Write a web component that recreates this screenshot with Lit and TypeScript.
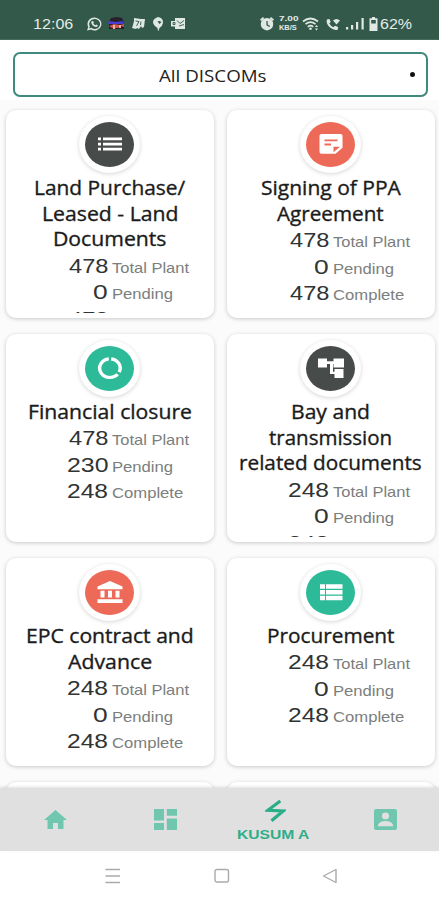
import { LitElement, html, css, svg } from "lit";
import { customElement, property } from "lit/decorators.js";

/** One line of text, stretched horizontally to a given width. */
@customElement("fit-text")
class FitText extends LitElement {
  @property() text = "";
  @property({ type: Number }) width = 0;

  static styles = css`
    :host { display: block; flex: none; }
    .box { display: block; }
    .line { display: inline-block; white-space: pre; transform-origin: 0 50%; }
  `;

  updated() {
    const box = this.renderRoot.querySelector(".box") as HTMLElement;
    const line = this.renderRoot.querySelector(".line") as HTMLElement;
    box.style.width = `${this.width}px`;
    line.style.transform = `scaleX(${this.width / line.offsetWidth})`;
  }

  render() {
    return html`<span class="box"><span class="line">${this.text}</span></span>`;
  }
}

type Line = [text: string, width: number];

interface Task {
  icon: string;
  tone: "dark" | "coral" | "green";
  title: Line[];
  stats: string[];
}

const NUMBER_WIDTH: Record<string, number> = { "478": 39, "230": 41, "248": 40.5, "0": 14.5 };
const STAT_LABELS: Line[] = [["Total Plant", 77], ["Pending", 61], ["Complete", 71]];

const TASKS: Task[] = [
  { icon: "list", tone: "dark", title: [["Land Purchase/", 151], ["Leased - Land", 136], ["Documents", 113]], stats: ["478", "0", "478"] },
  { icon: "note", tone: "coral", title: [["Signing of PPA", 140], ["Agreement", 107]], stats: ["478", "0", "478"] },
  { icon: "ring", tone: "green", title: [["Financial closure", 164]], stats: ["478", "230", "248"] },
  { icon: "tree", tone: "dark", title: [["Bay and", 79], ["transmission", 123], ["related documents", 183]], stats: ["248", "0", "248"] },
  { icon: "bank", tone: "coral", title: [["EPC contract and", 168], ["Advance", 84]], stats: ["248", "0", "248"] },
  { icon: "rows", tone: "green", title: [["Procurement", 128]], stats: ["248", "0", "248"] },
];

const GLYPHS: Record<string, unknown> = {
  list: svg`<path d="M0 5h3v3H0zM5 5h19v3H5zM0 10.500h3v3H0zM5 10.500h19v3H5zM0 16h3v3H0zM5 16h19v3H5z"/>`,
  note: svg`<path fill-rule="evenodd" d="M2.500 1h19Q23.500 1 23.500 3v13l-7 6.500h-14Q.5 22.500.5 20.500V3Q.5 1 2.500 1zM5.500 7v2h13V7zM5.500 11.500v2h6.500v-2zM14.500 15v6l6.500-6z"/>`,
  ring: svg`<g fill="none" stroke="#fff" stroke-width="3.400"><path d="M13.200 2A10.200 10.200 0 0 1 21.200 16.500"/><path d="M19.600 18.800A10.200 10.200 0 1 1 10.800 2"/></g>`,
  tree: svg`<path d="M-1 1.500h9v3h6.500v-3h10.500v10H14.500V7.500H14v8.500h1.500V13h9v10h-9v-4.500H11v-11H8V11.500h-9z"/>`,
  bank: svg`<path d="M12 0 24.500 6v3H-.5V6zM2.500 10.500h4v7.500h-4zM10 10.500h4v7.500h-4zM17.500 10.500h4v7.500h-4zM-.5 20h25v4H-.5z"/>`,
  rows: svg`<path d="M1 3.500h5v5H1zM7 3.500h16.500v5H7zM1 9.700h5v5H1zM7 9.700h16.500v5H7zM1 16h5v5H1zM7 16h16.500v5H7z"/>`,
};

@customElement("task-card")
class TaskCard extends LitElement {
  @property({ attribute: false }) task?: Task;

  static styles = css`
    :host {
      display: block; box-sizing: border-box; height: 207.5px; padding-bottom: 4.5px;
      background: #fff; border-radius: 10px;
      box-shadow: 0 1px 4px rgba(0, 0, 0, 0.2);
    }
    .content { height: 203px; overflow: hidden; }
    .badge {
      display: flex; align-items: center; justify-content: center;
      box-sizing: border-box; width: 61px; height: 57px; margin: 5.5px auto 2.4px;
      border-radius: 50%; background: #fff; box-shadow: 0 1px 4px rgba(0, 0, 0, 0.17);
    }
    .disc {
      display: flex; align-items: center; justify-content: center;
      width: 49px; height: 45px; border-radius: 50%;
    }
    .dark { background: #474b4a; }
    .coral { background: #ee6a58; }
    .green { background: #2dba98; }
    .disc svg { width: 24px; height: 22px; fill: #fff; overflow: visible; }
    .title {
      display: flex; flex-direction: column; align-items: center;
      font: 500 19.500px/25.800px "Open Sans", sans-serif; color: #1b1b1b;
      -webkit-text-stroke: 0.35px #1b1b1b;
    }
    .stats { margin-top: 0.6px; }
    .stat { display: grid; grid-template-columns: 102px auto; column-gap: 4px; height: 26.5px; }
    .number {
      display: flex; justify-content: flex-end;
      font: 20px/26.5px "Liberation Sans", sans-serif; color: #303433;
    }
    .label { font: 15px/29px "Liberation Sans", sans-serif; color: #7b7e7d; }
  `;

  render() {
    const t = this.task;
    if (!t) return html`<div class="content"></div>`;
    return html`<div class="content">
      <div class="badge"><div class="disc ${t.tone}"><svg viewBox="0 0 24 24" preserveAspectRatio="none">${GLYPHS[t.icon]}</svg></div></div>
      <div class="title">${t.title.map(([text, w]) => html`<fit-text .text=${text} .width=${w}></fit-text>`)}</div>
      <div class="stats">${t.stats.map((n, i) => html`<div class="stat">
        <div class="number"><fit-text .text=${n} .width=${NUMBER_WIDTH[n]}></fit-text></div>
        <fit-text class="label" .text=${STAT_LABELS[i][0]} .width=${STAT_LABELS[i][1]}></fit-text>
      </div>`)}</div>
    </div>`;
  }
}

@customElement("app-root")
class AppRoot extends LitElement {
  static styles = css`
    :host {
      display: flex; flex-direction: column; width: 439px; height: 900px;
      overflow: hidden; background: #fff; font-family: "Liberation Sans", sans-serif;
    }
    .status {
      flex: none; box-sizing: border-box; height: 40px; padding: 8px 27px 0 33px;
      display: flex; align-items: center; justify-content: space-between;
      background: #33594a; color: #e3ebe6; border-bottom: 1px solid #456b5c;
    }
    .group { display: flex; align-items: center; }
    .status svg { display: block; fill: #dfe8e3; }
    .clock { font-size: 14.5px; line-height: 16px; margin-right: 8px; }
    .app-icons { gap: 6px; }
    .speed { display: flex; flex-direction: column; gap: 1px; margin: 0 3px 0 5px; font: bold 7px/8px "Liberation Sans", sans-serif; }
    .battery-text { font-size: 14px; line-height: 16px; margin-left: 2px; }
    .wifi { margin-right: 6px; }
    .call { margin-right: 5px; }
    .signal { margin-right: 4px; }
    .filter {
      flex: none; box-sizing: border-box; height: 45.5px; margin: 11.5px 11px 13px 12.5px;
      padding: 0 11.5px 0 12px; border: 2px solid #40897d; border-radius: 7px;
      display: grid; grid-template-columns: 1fr auto 1fr; align-items: center; background: #fff;
    }
    .filter-text { grid-column: 2; font: 17px/24px "Open Sans", sans-serif; color: #222; margin: 4px 17px 0 0; }
    .dot { justify-self: end; width: 5px; height: 5px; border-radius: 50%; background: #111; }
    .list-wrap { flex: 1; min-height: 0; display: flex; margin-top: -10px; overflow: hidden; }
    .list { flex: 1; min-height: 0; overflow: hidden; background: #fbfbfb; padding-top: 10px; }
    .cards {
      display: grid; grid-template-columns: 208.5px 208.5px; column-gap: 12.5px; row-gap: 16.5px;
      padding: 0 4.5px 0 5.5px;
    }
    .tabs {
      flex: none; height: 62.5px; display: grid; grid-template-columns: repeat(4, 110px);
      background: #e0e0e0; box-shadow: 0 -1px 3px rgba(0, 0, 0, 0.13); z-index: 1;
    }
    .tab { display: flex; flex-direction: column; align-items: center; justify-content: center; fill: #70c6ae; }
    .tab svg { display: block; }
    .active { fill: none; stroke: #2aae87; color: #2fae88; justify-content: flex-start; padding-top: 12px; }
    .tab-label { font: bold 13.5px/16px "Liberation Sans", sans-serif; margin: 5px 4px 0 0; }
    .system {
      flex: none; height: 49.5px; box-sizing: border-box; padding: 17px 101px 0 105px;
      display: flex; justify-content: space-between; background: #fff;
    }
    .system svg { fill: none; stroke: #aaa; stroke-width: 1.4; }
  `;

  render() {
    return html`
      <header class="status">
        <div class="group app-icons">
          <fit-text class="clock" .text=${"12:06"} .width=${40}></fit-text>
          <svg width="15" height="14" viewBox="0 0 24 24" preserveAspectRatio="none"><path fill-rule="evenodd" d="M12 1a11 11 0 1 1-5.500 20.500L0 23l2-6A11 11 0 0 1 12 1zm0 2.500A8.500 8.500 0 0 0 4.500 16l-1 3.500L7 18.500A8.500 8.500 0 1 0 12 3.500zM8 7l2 .2 1 2.600-1 1.400q1 2 3.300 3l1.400-1.300 2.500 1.200q0 3-2.700 2.900Q8 16 6.800 9.800 6.800 8 8 7z"/></svg>
          <svg width="17" height="13" viewBox="0 0 17 13"><path fill="#26202b" d="M3 1 9 0l5 1 2 4v7H1V5z"/><path fill="#493bd5" d="m1 4 7 1 7-1 1 3H0z"/><path fill="#d8524c" d="m1 9 5-2 6 1 4-1v3l-3-1-3 2H4z"/><path fill="#eab8a2" d="M5 8h2v4H5zM11 8h2v3h-2z"/></svg>
          <svg width="15" height="14" viewBox="0 0 15 14"><path d="m3 1 7 1 4 0-1 8-2 1-1-2-2 3-2-1-1 1-4-1 1-3 1-4z"/><path d="M4.500 4 8 4.500 5.500 9M10 4.500 9.500 8" stroke="#426759" fill="none"/></svg>
          <svg width="12" height="14" viewBox="0 0 12 14"><path fill-rule="evenodd" d="M6 0q5.500 1 5 6-.5 3-3.500 5l-1 3q-1 0-1-3Q1 8 1 5t5-5zM5.500 4.500 7.500 7l2-2-2-1z"/></svg>
          <svg width="16" height="13" viewBox="0 0 16 13"><path d="M5 1h10v11H5V9.500H1V4h4z"/><path d="M3 5.500h2v2H3zM7 3.500l3 3 4-3M9 9l5-1.500" stroke="#426759" fill="none"/></svg>
        </div>
        <div class="group">
          <svg width="14" height="15" viewBox="0 0 14 15"><path fill-rule="evenodd" d="M7 2a6.200 6.200 0 1 1 0 12.400A6.200 6.200 0 0 1 7 2zM6.400 5v4.200l3 1.800.7-1-2.400-1.500V5zM0 3.500 3 1l1.200 1.300L1.200 5zM14 3.500 11 1 9.800 2.300l3 2.700z"/></svg>
          <div class="speed"><fit-text .text=${"7.00"} .width=${20}></fit-text><fit-text .text=${"KB/S"} .width=${18}></fit-text></div>
          <svg class="wifi" width="18" height="14" viewBox="0 0 18 14"><g fill="none" stroke="#dfe8e3" stroke-width="1.700"><path d="M1 4.500Q8.500-1.500 16 4.500M3.500 7.200q5-4 10 0M5.800 9.800q2.700-2.200 5.400 0"/></g><circle cx="8.500" cy="11.800" r="1.300"/><path d="m14.500 8-1.600 2h3.200zM14.500 13.500l-1.600-2h3.200z"/></svg>
          <svg class="call" width="15" height="14" viewBox="0 0 15 14"><path d="M.8 2.500 3.500 2l1.200 3L3.300 6.500q1.500 2.500 4 3.800L9 8.700l3.200 1.200-.5 2.800Q8 13.800 4 10.500 0 7 .8 2.500z"/><path d="M7 3.500q3.500-3 7 0L10.500 7.500z"/></svg>
          <svg class="signal" width="19" height="13" viewBox="0 0 19 13"><path d="M0 10h2.200v2.500H0zM5 8h2.200v4.500H5zM10 5h2.200v7.500H10zM15.500 1h2.200v11.500h-2.200z"/></svg>
          <svg width="9" height="14" viewBox="0 0 9 14"><path fill-rule="evenodd" d="M3 0h3v1.300h2.500V14H.5V1.300H3zM2.200 3v3.500h4.600V3z"/></svg>
          <fit-text class="battery-text" .text=${"62%"} .width=${32}></fit-text>
        </div>
      </header>
      <div class="filter">
        <fit-text class="filter-text" .text=${"All DISCOMs"} .width=${107}></fit-text>
        <span class="dot"></span>
      </div>
      <div class="list-wrap"><div class="list"><main class="cards">
        ${TASKS.map((t) => html`<task-card .task=${t}></task-card>`)}
        <task-card></task-card><task-card></task-card>
      </main></div></div>
      <nav class="tabs">
        <div class="tab"><svg width="23" height="19" viewBox="0 0 23 19"><path d="M11.500 0 23 10h-3.500v9h-5.500v-6H9v6H3.500v-9H0z"/></svg></div>
        <div class="tab"><svg width="23" height="21" viewBox="0 0 23 21"><path d="M0 0h10v11.500H0zM12.800 0H23v6.800H12.800zM0 14h10v7H0zM12.800 9.500H23V21H12.800z"/></svg></div>
        <div class="tab active"><svg width="21" height="22" viewBox="0 0 21 22"><path d="M15.300 1 2.800 10.300l15.400.6L6.500 20.800" stroke-width="3.200"/></svg><fit-text class="tab-label" .text=${"KUSUM A"} .width=${73}></fit-text></div>
        <div class="tab"><svg width="23" height="21" viewBox="0 0 23 21"><path fill-rule="evenodd" d="M2 0h19q2 0 2 2v17q0 2-2 2H2q-2 0-2-2V2Q0 0 2 0zM11.500 3.500a3.600 3.400 0 1 0 0 6.800 3.600 3.400 0 0 0 0-6.800zM4 17.300h15v-1.500q-1.500-3.800-7.500-3.800T4 15.800z"/></svg></div>
      </nav>
      <footer class="system">
        <svg width="16" height="16" viewBox="0 0 16 16"><path d="M.5 1.500h14.500M.5 8h14.500M.5 14.500h14.500"/></svg>
        <svg width="16" height="16" viewBox="0 0 16 16"><rect x="1" y="1.500" width="13.500" height="12.500" rx="2"/></svg>
        <svg width="16" height="16" viewBox="0 0 16 16"><path d="M1.500 8 14 1.500v13z" stroke-linejoin="round"/></svg>
      </footer>
    `;
  }
}
